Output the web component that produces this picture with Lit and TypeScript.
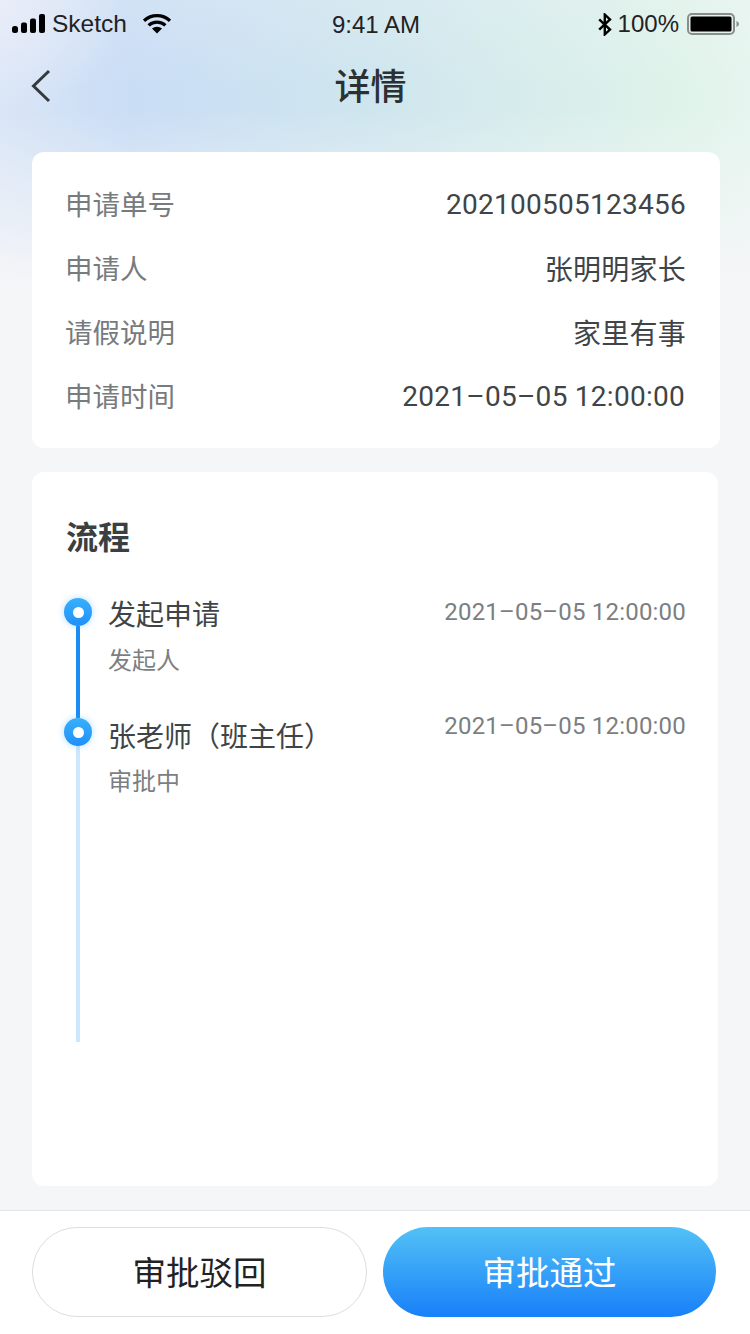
import { LitElement, html, css, svg } from 'lit'
import { customElement } from 'lit/decorators.js'

const infoRows = [
  { label: '申请单号', value: '202100505123456' },
  { label: '申请人', value: '张明明家长' },
  { label: '请假说明', value: '家里有事' },
  { label: '申请时间', value: '2021–05–05 12:00:00' },
]

const signalIcon = svg`<svg width="34" height="20" viewBox="0 0 34 20">
  <rect x="0" y="12" width="6" height="7" rx="2.5" fill="#000"/>
  <rect x="9" y="8.5" width="6" height="10.5" rx="2" fill="#000"/>
  <rect x="18" y="4.5" width="6" height="14.5" rx="2" fill="#000"/>
  <rect x="27" y="0" width="6" height="19" rx="2" fill="#000"/>
</svg>`

const wifiIcon = svg`<svg width="28" height="20" viewBox="0 0 28 20">
  <path d="M1 6.8 A19 19 0 0 1 27 6.8" fill="none" stroke="#000" stroke-width="3.2"/>
  <path d="M5.6 11.4 A12.4 12.4 0 0 1 22.4 11.4" fill="none" stroke="#000" stroke-width="3.2"/>
  <path d="M14 19.6 L9 14.6 A7.4 7.4 0 0 1 19 14.6 Z" fill="#000"/>
</svg>`

const btIcon = svg`<svg width="14" height="23" viewBox="0 0 14 23">
  <path d="M1.2 6.4 L12 16.6 L6.8 21.4 L6.8 1.6 L12 6.4 L1.2 16.6" fill="none" stroke="#000" stroke-width="2.4"/>
</svg>`

const batteryIcon = svg`<svg width="53" height="22" viewBox="0 0 53 22">
  <rect x="1" y="1" width="46" height="20" rx="4" fill="none" stroke="#8a8d8c" stroke-width="2"/>
  <rect x="3.500" y="3.500" width="41" height="15" rx="1.500" fill="#000"/>
  <path d="M49.500 8 Q52 8.800 52 11 Q52 13.200 49.500 14 Z" fill="#8a8d8c"/>
</svg>`

const backIcon = svg`<svg width="20" height="34" viewBox="0 0 20 34">
  <path d="M18 2 L2.500 17 L18 32" fill="none" stroke="#333a3c" stroke-width="3"/>
</svg>`

@customElement('app-root')
export class AppRoot extends LitElement {
  render() {
    return html`
      <div class="page">
        <div class="status">
          <div class="status-side">
            ${signalIcon}<span class="carrier">Sketch</span>${wifiIcon}
          </div>
          <div class="clock">9:41 AM</div>
          <div class="status-side right">
            ${btIcon}<span class="percent">100%</span>${batteryIcon}
          </div>
        </div>
        <div class="nav">
          <span class="back">${backIcon}</span>
          <span class="nav-title">详情</span>
        </div>
        <div class="card info">
          ${infoRows.map(
            (r) => html`<div class="row">
              <span class="label">${r.label}</span>
              <span class="value">${r.value}</span>
            </div>`
          )}
        </div>
        <div class="card flow">
          <div class="flow-title">流程</div>
          <div class="step first">
            <div class="rail">
              <span class="dot"></span>
              <span class="line done"></span>
            </div>
            <div class="step-body">
              <div class="step-head">
                <span class="step-name">发起申请</span>
                <span class="step-time">2021–05–05 12:00:00</span>
              </div>
              <div class="step-sub">发起人</div>
            </div>
          </div>
          <div class="step second">
            <div class="rail">
              <span class="dot"></span>
              <span class="line todo"></span>
            </div>
            <div class="step-body">
              <div class="step-head">
                <span class="step-name">张老师（班主任）</span>
                <span class="step-time">2021–05–05 12:00:00</span>
              </div>
              <div class="step-sub">审批中</div>
            </div>
          </div>
        </div>
        <div class="footer">
          <button class="btn reject">审批驳回</button>
          <button class="btn pass">审批通过</button>
        </div>
      </div>
    `
  }

  static styles = css`
    :host {
      display: block;
      font-family: 'Roboto', 'Noto Sans CJK SC', sans-serif;
    }

    .page {
      width: 750px;
      height: 1334px;
      display: flex;
      flex-direction: column;
      overflow: hidden;
      background:
        radial-gradient(circle at 0 0, rgba(240, 240, 250, 0.6), rgba(240, 240, 250, 0) 120px),
        linear-gradient(180deg, rgba(245, 246, 248, 0.2) 0, rgba(245, 246, 248, 0) 90px),
        linear-gradient(180deg, rgba(245, 246, 248, 0) 110px, #f5f6f8 290px),
        linear-gradient(90deg, #d9e5f6 0, #c9ddf5 130px, #cfe6ee 380px, #dff3ea 680px, #e6f5ef 750px);
    }

    .status {
      height: 48px;
      display: grid;
      grid-template-columns: 1fr auto 1fr;
      align-items: center;
      padding: 0 10px 0 12px;
      font-family: 'Liberation Sans', sans-serif;
      font-size: 24px;
      color: #222;
    }

    .status-side {
      display: flex;
      align-items: center;
      gap: 6px;
    }

    .status-side.right {
      justify-content: flex-end;
    }

    .carrier {
      font-size: 24.500px;
      margin-right: 10px;
    }

    .percent {
      margin-right: 2px;
    }

    .clock {
      padding-top: 2px;
    }

    .nav {
      height: 76px;
      display: flex;
      align-items: center;
      justify-content: center;
      position: relative;
    }

    .back {
      position: absolute;
      left: 31px;
      top: 21px;
      display: flex;
    }

    .nav-title {
      font-size: 36px;
      font-weight: 500;
      color: #2b3133;
      margin-right: 9px;
      margin-bottom: 5px;
    }

    .card {
      background: #fff;
      border-radius: 12px;
    }

    .info {
      margin: 28px 30px 0 32px;
      height: 296px;
      padding: 20px 34px 20px 33px;
      box-sizing: border-box;
      display: flex;
      flex-direction: column;
    }

    .row {
      height: 64px;
      display: flex;
      align-items: center;
      justify-content: space-between;
      font-size: 28px;
    }

    .row:last-child .value {
      margin-right: 1px;
    }

    .label {
      font-size: 27.500px;
      color: #777b7e;
      margin-bottom: 2px;
    }

    .value {
      color: #3f4447;
      letter-spacing: 0.270px;
    }

    .flow {
      margin: 24px 32px 0 32px;
      height: 714px;
      padding: 44px 32px 0 32px;
      box-sizing: border-box;
    }

    .flow-title {
      font-size: 32px;
      font-weight: 700;
      line-height: 44px;
      color: #3a3f42;
      margin-left: 2px;
      margin-bottom: 38px;
    }

    .step {
      display: flex;
      gap: 16px;
    }

    .step.first {
      height: 120px;
    }

    .step.second {
      height: 324px;
    }

    .rail {
      width: 28px;
      display: flex;
      flex-direction: column;
      align-items: center;
    }

    .dot {
      width: 28px;
      height: 28px;
      flex: none;
      display: flex;
      align-items: center;
      justify-content: center;
      border-radius: 50%;
      background: linear-gradient(180deg, #39b0fa, #1f90fb);
      box-shadow: 0 0 7px rgba(70, 170, 255, 0.4);
      z-index: 1;
    }

    .dot::after {
      content: '';
      width: 11px;
      height: 11px;
      border-radius: 50%;
      background: #fff;
    }

    .line {
      width: 4px;
      flex: 1;
    }

    .line.done {
      background: #1a8cf5;
    }

    .line.todo {
      background: #cde7fc;
    }

    .step-body {
      flex: 1;
    }

    .first .step-body {
      padding-top: 2px;
    }

    .second .step-body {
      padding-top: 4px;
    }

    .step-head {
      display: flex;
      justify-content: space-between;
      align-items: flex-start;
    }

    .step-name {
      font-size: 28px;
      line-height: 32px;
      color: #3f4447;
    }

    .step-time {
      font-size: 24px;
      line-height: 28px;
      letter-spacing: 0.200px;
      color: #7b7f82;
    }

    .first .step-time {
      margin-top: -2px;
    }

    .second .step-time {
      margin-top: -10px;
    }

    .step-sub {
      margin-top: 14px;
      font-size: 24px;
      line-height: 28px;
      color: #7b7f82;
    }

    .first .step-sub {
      margin-top: 15px;
    }

    .footer {
      margin-top: auto;
      height: 124px;
      box-sizing: border-box;
      background: #fff;
      border-top: 1px solid #e3e5e7;
      padding: 16px 34px 0 32px;
      display: flex;
      gap: 16px;
    }

    .btn {
      flex: 1 1 0;
      min-width: 0;
      height: 90px;
      border-radius: 45px;
      font-family: inherit;
      font-size: 33.500px;
      padding: 0 0 3px;
    }

    .reject {
      background: #fff;
      border: 1px solid #dcdddf;
      color: #222;
    }

    .pass {
      border: none;
      color: #fff;
      background: linear-gradient(180deg, #53c1f6 0%, #1880f9 100%);
    }
  `
}

declare global {
  interface HTMLElementTagNameMap {
    'app-root': AppRoot
  }
}
